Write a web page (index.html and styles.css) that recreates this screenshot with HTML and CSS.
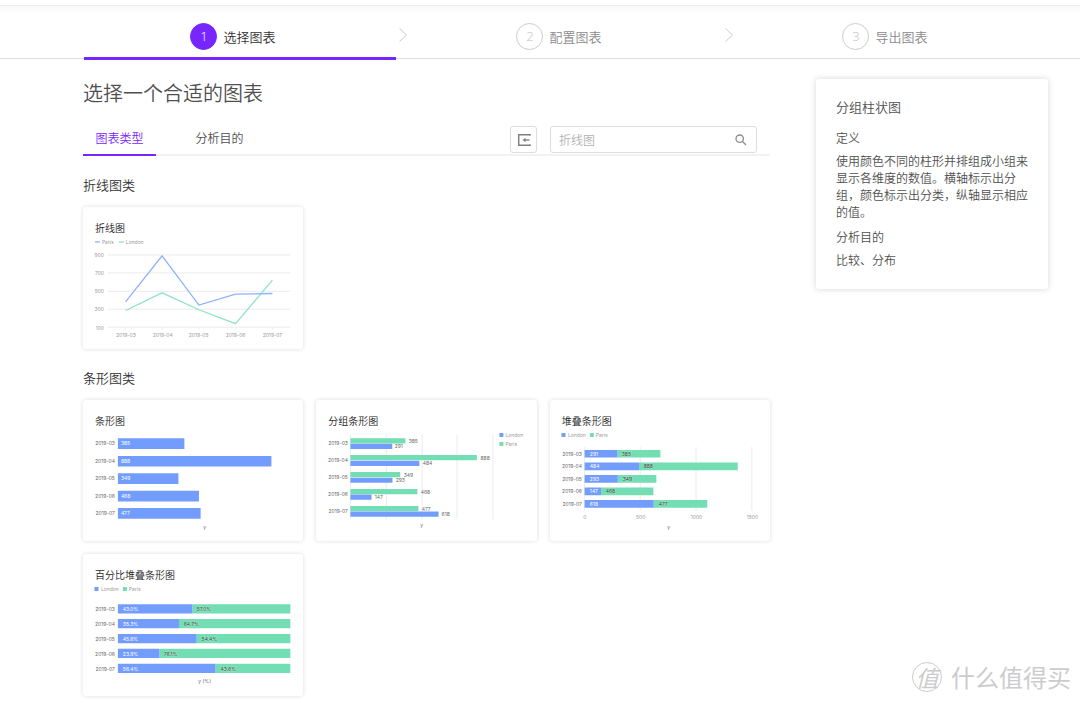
FILE: index.html
```html
<!DOCTYPE html>
<html lang="zh-CN">
<head>
<meta charset="utf-8">
<meta name="viewport" content="width=device-width, initial-scale=1">
<title>选择图表</title>
<link rel="stylesheet" href="styles.css">
</head>
<body>
<header class="header">
  <nav class="steps" aria-label="步骤">
    <button class="step step-active" type="button"><span class="step-num">1</span>选择图表</button>
    <svg class="chevron" viewBox="0 0 14 16" aria-hidden="true"><path d="M3.500 1.500L10.500 8L3.500 14.500"/></svg>
    <button class="step" type="button"><span class="step-num">2</span>配置图表</button>
    <svg class="chevron" viewBox="0 0 14 16" aria-hidden="true"><path d="M3.500 1.500L10.500 8L3.500 14.500"/></svg>
    <button class="step" type="button"><span class="step-num">3</span>导出图表</button>
  </nav>
</header>

<div class="page">
  <main class="content">
    <h1 class="title">选择一个合适的图表</h1>
    <div class="toolbar">
      <div class="tabs">
        <button class="tab tab-active" type="button">图表类型</button>
        <button class="tab" type="button">分析目的</button>
      </div>
      <button class="collapse" type="button" aria-label="收起">
        <svg viewBox="0 0 14 14" width="14" height="14" aria-hidden="true"><path d="M13 2.700V1.700H1.700V12.300H13V11.300" fill="none" stroke="#808080" stroke-width="1.500"/><path d="M7 7H12.500" stroke="#808080" stroke-width="1.400"/><path d="M8.500 4.700L5.500 7L8.500 9.300Z" fill="#808080"/></svg>
      </button>
      <label class="search">
        <input class="search-input" type="text" placeholder="折线图" aria-label="搜索图表">
        <svg viewBox="0 0 12 12" width="12" height="12" aria-hidden="true"><circle cx="4.700" cy="4.700" r="3.700"/><path d="M7.500 7.500L11 11"/></svg>
      </label>
    </div>

    <h2 class="group-title">折线图类</h2>
    <div class="grid">
      <article class="card">
        <h3 class="card-title">折线图</h3>
        <svg class="chart" viewBox="0 0 221 114">
          <path class="line-a" d="M12 7H17"/><path class="line-b" d="M36 7H41"/>
          <g class="muted"><text x="19" y="9">Paris</text><text x="43" y="9">London</text></g>
          <path class="rule" d="M25 20H208M25 38H208M25 56.500H208M25 74.500H208M25 92.500H208M42.500 93V95M79.500 93V95M116.500 93V95M153.500 93V95M190.500 93V95"/>
          <g class="muted end"><text x="21" y="22">900</text><text x="21" y="40">700</text><text x="21" y="58">500</text><text x="21" y="76">300</text><text x="21" y="95">100</text></g>
          <g class="muted mid"><text x="43" y="102">2019-03</text><text x="80" y="102">2019-04</text><text x="116" y="102">2019-05</text><text x="153" y="102">2019-06</text><text x="190" y="102">2019-07</text></g>
          <path class="line-b" d="M42.700 75.700L79.300 58L116.300 75L153 89L190 45.300"/>
          <path class="line-a" d="M42.700 67L79.300 21L116.300 70.300L153 59.300L190 58.700"/>
        </svg>
      </article>
    </div>

    <h2 class="group-title">条形图类</h2>
    <div class="grid">
      <article class="card">
        <h3 class="card-title">条形图</h3>
        <svg class="chart" viewBox="0 0 221 114">
          <path class="a" d="M35 10.300h66.700v10.700H35zM35 28h154v10.700H35zM35 45.400h60.700v10.700H35zM35 63h81.300v10.700H35zM35 80.300h83v10.700H35z"/>
          <g class="dark end"><text x="32" y="17">2019-03</text><text x="32" y="35">2019-04</text><text x="32" y="52">2019-05</text><text x="32" y="70">2019-06</text><text x="32" y="87">2019-07</text></g>
          <g class="light"><text x="38" y="17">385</text><text x="38" y="35">888</text><text x="38" y="52">349</text><text x="38" y="70">468</text><text x="38" y="87">477</text></g>
          <text class="dark mid" x="122" y="101">y</text>
        </svg>
      </article>
      <article class="card">
        <h3 class="card-title">分组条形图</h3>
        <svg class="chart" viewBox="0 0 221 114">
          <path class="rule" d="M34.500 7V91.500M70.500 7V91.500M106.500 7V91.500M141.500 7V91.500M177.500 7V91.500"/>
          <path class="b" d="M34.500 10.300h55.200v5.200H34.500zM34.500 27.200h126.800v5.200H34.500zM34.500 44.200h50v5.200H34.500zM34.500 61.200h67.200v5.200H34.500zM34.500 78.200h68.200v5.200H34.500z"/>
          <path class="a" d="M34.500 15.900h42v5.200H34.500zM34.500 32.800h69.200v5.200H34.500zM34.500 49.800h42.200v5.200H34.500zM34.500 66.800h21.200v5.200H34.500zM34.500 83.800h88.500v5.200H34.500z"/>
          <g class="dark end"><text x="32" y="17">2019-03</text><text x="32" y="34">2019-04</text><text x="32" y="51">2019-05</text><text x="32" y="68">2019-06</text><text x="32" y="85">2019-07</text></g>
          <g class="dark"><text x="93" y="15">385</text><text x="79" y="20">291</text><text x="165" y="32">888</text><text x="107" y="37">484</text><text x="88" y="49">349</text><text x="80" y="54">293</text><text x="105" y="66">468</text><text x="59" y="71">147</text><text x="106" y="83">477</text><text x="126" y="88">618</text></g>
          <path class="a" d="M184 5h4v4h-4z"/><path class="b" d="M184 14h4v4h-4z"/>
          <g class="muted"><text x="190" y="9">London</text><text x="190" y="18">Paris</text></g>
          <text class="dark mid" x="106" y="99">y</text>
        </svg>
      </article>
      <article class="card">
        <h3 class="card-title">堆叠条形图</h3>
        <svg class="chart" viewBox="0 0 221 114">
          <path class="a" d="M11.500 5h4v4h-4z"/><path class="b" d="M40 5h4v4h-4z"/>
          <g class="muted"><text x="18" y="9">London</text><text x="46" y="9">Paris</text></g>
          <path class="rule" d="M34.500 19V83M90.500 19V83M146.500 19V83M202.500 19V83"/>
          <path class="b" d="M67.700 22h43v7.700h-43zM89.300 34.600h99v7.700h-99zM68 47.200h38.700v7.700h-38.700zM51.300 59.700h52.400v7.700h-52.400zM104 72.300h53.700v7.700h-53.700z"/>
          <path class="a" d="M34.700 22h33v7.700h-33zM34.700 34.600h54.600v7.700h-54.600zM34.700 47.200h33.300v7.700h-33.300zM34.700 59.700h16.600v7.700h-16.600zM34.700 72.300h69.300v7.700h-69.300z"/>
          <g class="dark end"><text x="32" y="28">2019-03</text><text x="32" y="40">2019-04</text><text x="32" y="53">2019-05</text><text x="32" y="65">2019-06</text><text x="32" y="78">2019-07</text></g>
          <g class="light"><text x="40" y="28">291</text><text x="40" y="40">484</text><text x="40" y="53">293</text><text x="40" y="65">147</text><text x="40" y="78">618</text></g>
          <g class="halo"><text x="72" y="28">385</text><text x="94" y="40">888</text><text x="73" y="53">349</text><text x="56" y="65">468</text><text x="109" y="78">477</text></g>
          <g class="muted mid"><text x="35" y="91">0</text><text x="91" y="91">500</text><text x="147" y="91">1000</text><text x="203" y="91">1500</text></g>
          <text class="dark mid" x="119" y="101">y</text>
        </svg>
      </article>
      <article class="card">
        <h3 class="card-title">百分比堆叠条形图</h3>
        <svg class="chart" viewBox="0 0 221 114">
          <path class="a" d="M11.500 5h4v4h-4z"/><path class="b" d="M40 5h4v4h-4z"/>
          <g class="muted"><text x="18" y="9">London</text><text x="46" y="9">Paris</text></g>
          <path class="b" d="M109.700 22.200H208v9.300h-98.300zM96.300 37.200H208v9.300h-111.700zM114 52.100H208v9.300h-94zM76.700 67H208v9.300h-131.300zM133 82H208v9.300h-75z"/>
          <path class="a" d="M35 22.200h74.700v9.300H35zM35 37.200h61.300v9.300H35zM35 52.100h79v9.300H35zM35 67h41.700v9.300H35zM35 82h98v9.300H35z"/>
          <g class="dark end"><text x="32" y="29">2019-03</text><text x="32" y="44">2019-04</text><text x="32" y="59">2019-05</text><text x="32" y="74">2019-06</text><text x="32" y="89">2019-07</text></g>
          <g class="light"><text x="40" y="29">43.0%</text><text x="40" y="44">35.3%</text><text x="40" y="59">45.6%</text><text x="40" y="74">23.9%</text><text x="40" y="89">56.4%</text></g>
          <g class="halo"><text x="114" y="29">57.0%</text><text x="101" y="44">64.7%</text><text x="119" y="59">54.4%</text><text x="81" y="74">76.1%</text><text x="138" y="89">43.6%</text></g>
          <text class="dark mid" x="122" y="101">y (%)</text>
        </svg>
      </article>
    </div>
  </main>

  <aside class="panel">
    <h2 class="panel-title">分组柱状图</h2>
    <h3 class="panel-label">定义</h3>
    <p class="panel-text">使用颜色不同的柱形并排组成小组来显示各维度的数值。横轴标示出分组，颜色标示出分类，纵轴显示相应的值。</p>
    <h3 class="panel-label">分析目的</h3>
    <p class="panel-text">比较、分布</p>
  </aside>
</div>

<div class="watermark"><span class="seal">值</span>什么值得买</div>
</body>
</html>
```

FILE: styles.css
```css
* { box-sizing: border-box; }

body {
  margin: 0;
  background: #fff;
  color: #505050;
  font-family: "Noto Sans CJK SC", "Liberation Sans", sans-serif;
  font-weight: 350;
  font-size: 12px;
}

h1, h2, h3, p { margin: 0; font-weight: inherit; }

button {
  padding: 0;
  border: 0;
  background: none;
  color: inherit;
  font: inherit;
  cursor: pointer;
}

.header {
  margin-top: 5px;
  padding: 0 32px 0 84px;
  border-top: 1px solid #ececec;
  border-bottom: 1px solid #ddd;
  background: linear-gradient(#f8f8f8, #fff 8px);
}

.steps { display: flex; align-items: center; height: 52px; }

.step {
  position: relative;
  flex: 1;
  display: flex;
  align-items: center;
  justify-content: center;
  gap: 6px;
  height: 100%;
  padding: 8px 14px 0 0;
  color: #8c8c8c;
  font-size: 13px;
}

.step-num {
  display: flex;
  align-items: center;
  justify-content: center;
  width: 27px;
  height: 27px;
  border: 1px solid #ccc;
  border-radius: 50%;
  color: #bfbfbf;
  font-family: "Open Sans", sans-serif;
}

.step-active { color: #333; }
.step-active .step-num { border-color: #7726ff; background: #7726ff; color: #fff; }

.step-active::after {
  content: "";
  position: absolute;
  right: 0;
  bottom: -2px;
  left: 0;
  height: 3px;
  background: #7726ff;
}

.chevron {
  width: 14px;
  height: 16px;
  margin-top: 6px;
  fill: none;
  stroke: #ccc;
}

.page {
  display: flex;
  align-items: flex-start;
  gap: 46px;
  padding: 20px 32px 6px 83px;
}

.content { flex: 1; min-width: 0; }

.title { font-size: 20px; line-height: 28px; }

.toolbar {
  display: flex;
  align-items: flex-start;
  margin-top: 14px;
  height: 35px;
  padding: 5px 13px 0 0;
  border-bottom: 2px solid #f2f2f2;
}

.tabs { display: flex; flex: 1; gap: 27px; }

.tab {
  width: 73px;
  height: 30px;
  padding-bottom: 6px;
  line-height: 22px;
}

.tab-active {
  padding-bottom: 4px;
  border-bottom: 2px solid #7726ff;
  color: #7726ff;
}

.collapse {
  display: flex;
  align-items: center;
  justify-content: center;
  width: 27px;
  height: 27px;
  border: 1px solid #ddd;
  border-radius: 3px;
}

.search {
  display: flex;
  align-items: center;
  width: 207px;
  height: 27px;
  margin-left: 13px;
  padding: 0 9px 0 8px;
  border: 1px solid #ddd;
  border-radius: 3px;
}

.search svg { fill: none; stroke: #8c8c8c; stroke-width: 1.3; }

.search-input {
  flex: 1;
  min-width: 0;
  padding: 0;
  border: 0;
  outline: 0;
  background: none;
  color: #595959;
  font: inherit;
}

.search-input::placeholder { color: #b3b3b3; }

.group-title {
  margin: 19px 0 12px;
  color: #333;
  font-size: 13px;
  line-height: 20px;
}

.grid {
  display: grid;
  grid-template-columns: repeat(3, 1fr);
  gap: 13px;
}

.card {
  padding-top: 14px;
  border-radius: 3px;
  box-shadow: 0 0 4px rgba(0, 0, 0, .14);
}

.card-title {
  padding-left: 12px;
  color: #222;
  font-size: 10px;
  line-height: 14px;
}

.chart {
  display: block;
  width: 100%;
  font-family: Inter, sans-serif;
  font-size: 5px;
  font-weight: 400;
}

.a { fill: #739dfc; }
.b { fill: #73deb3; }
.line-a, .line-b { fill: none; stroke-width: 1.3; }
.line-a { stroke: #8fb0ff; }
.line-b { stroke: #8fe5c2; }
.rule { fill: none; stroke: #ebebeb; }
.muted { fill: #999; }
.dark { fill: #666; }
.light { fill: #fff; }
.halo { fill: #404040; stroke: #fff; stroke-opacity: .3; paint-order: stroke; }
.mid { text-anchor: middle; }
.end { text-anchor: end; }

.panel {
  width: 232px;
  padding: 18px 20px 21px;
  border-radius: 3px;
  box-shadow: 0 0 6px rgba(0, 0, 0, .16);
}

.panel-title { font-size: 13px; line-height: 20px; }
.panel-label { margin-top: 6px; font-size: 12px; line-height: 22px; }
.panel-title + .panel-label { margin-top: 10px; }
.panel-text { margin-top: 3px; line-height: 17px; }

.watermark {
  position: absolute;
  right: 9px;
  bottom: 10px;
  display: flex;
  align-items: center;
  gap: 9px;
  color: #ccc;
  font-size: 24px;
  font-weight: 400;
  line-height: 32px;
}

.seal {
  display: flex;
  align-items: center;
  justify-content: center;
  width: 30px;
  height: 30px;
  border: 1px solid #ccc;
  border-radius: 50%;
  font-size: 23px;
  font-style: italic;
}
```
